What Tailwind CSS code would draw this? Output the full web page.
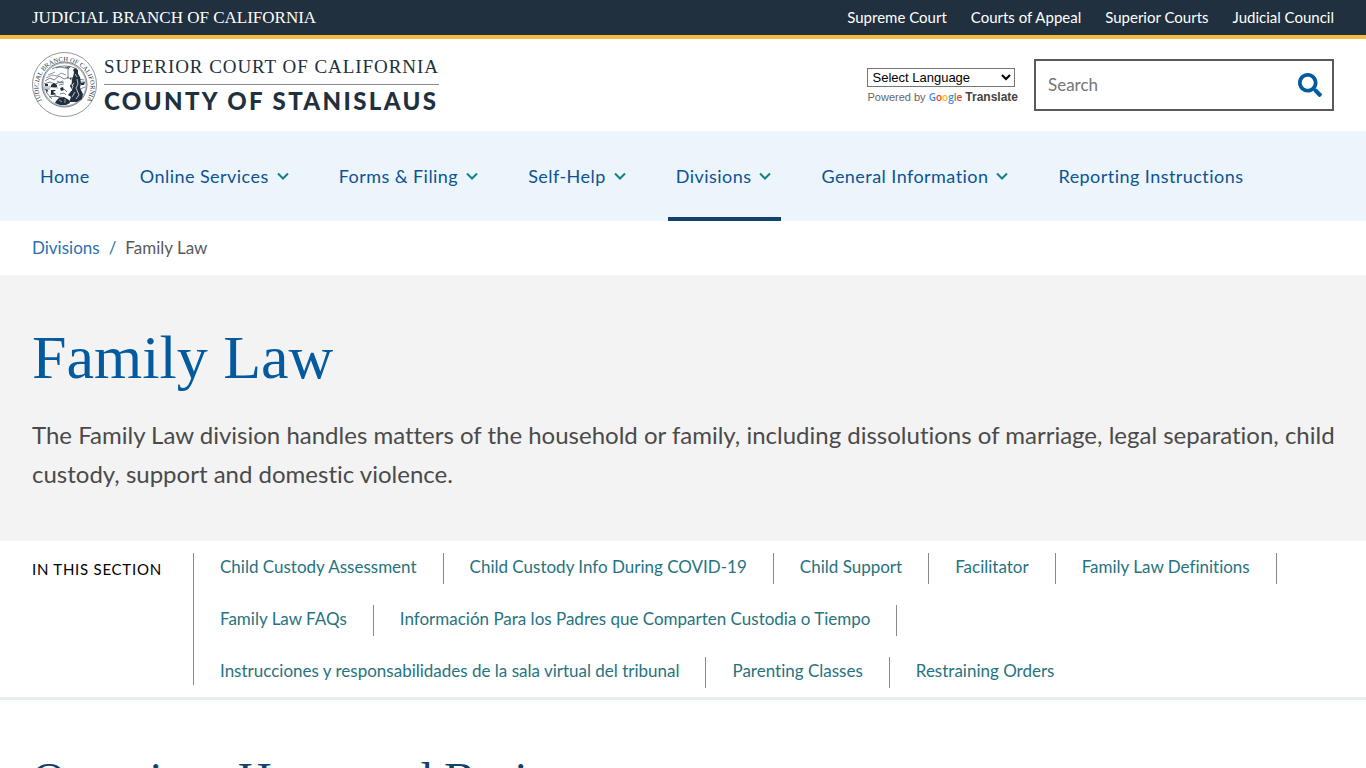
<!DOCTYPE html>
<html lang="en">

<head>
    <meta charset="UTF-8">
    <meta name="viewport" content="width=device-width, initial-scale=1.0">
    <title>Family Law | Superior Court of California | County of Stanislaus</title>
    <script src="https://cdn.jsdelivr.net/npm/@tailwindcss/browser@4"></script>
</head>

<body class="bg-white font-['Lato',sans-serif] text-[#4a4a4a] [font-variant-ligatures:none]">

    <!-- Top bar -->
    <div class="flex h-[39px] items-center justify-between border-b-4 border-[#f5bc42] bg-[#20303e] px-8 text-white">
        <a href="#" class="font-['Liberation_Serif',serif] text-[17px]">JUDICIAL BRANCH OF CALIFORNIA</a>
        <nav class="flex gap-6 text-[15px]" aria-label="Judicial branch">
            <a href="#">Supreme Court</a>
            <a href="#">Courts of Appeal</a>
            <a href="#">Superior Courts</a>
            <a href="#">Judicial Council</a>
        </nav>
    </div>

    <!-- Logo, language and search -->
    <header class="flex h-[92px] items-center justify-between px-8 pb-px">
        <a href="#" class="flex items-center gap-[7px] text-[#20303e]">
            <svg class="size-[65px]" viewBox="0 0 65 65" fill="none" stroke="currentColor" aria-hidden="true">
                <defs>
                    <path id="ring" d="M13 52.500 A26 26 0 1 1 52 52.500" />
                </defs>
                <circle cx="32.5" cy="32.5" r="32" stroke-width=".5" />
                <circle cx="32.5" cy="32.5" r="22.500" stroke-width=".6" />
                <circle cx="32.5" cy="32.5" r="21.500" stroke-width=".4" />
                <text font-family="Liberation Serif" font-size="6.5" fill="currentColor" stroke="none">
                    <textPath href="#ring" startOffset="50%" text-anchor="middle">JUDICIAL BRANCH OF CALIFORNIA</textPath>
                </text>
                <!-- sky, hills and spear -->
                <path d="M20 17c7-4 18-4 25 0M24 16l4-1 5 1 5-1M13 29l5-3 4 2 5-4 5 3 5-2M12 32l6-2 5 2 8-3M36 14v13M33 15l3 2 2-2M47 27l5 1M47 30h6M46 38l7-3M12 37h6M20 47l-6-7" stroke-width=".6" />
                <path d="M14 26l6-3 5 1 4-3 5 2M16 23l7-3M12 35h8l6 1M22 44l7 1 4 2M18 42l6 1" stroke-width=".5" />
                <!-- seated figure -->
                <path d="M41 18l2-2 3 2v4l2 3 1 6-1 5 3 6-1 5-5 3h-8l2-5-3-2 4-5-2-4 2-5-3-3 4-1 1-5z" fill="currentColor" stroke="none" />
                <path d="M40 25l-1 6 2 3-2 5M45 27l1 5-2 4 3 7-3 4M43 22l2 3M42 31l-2 3M43 40l-3 5" stroke="white" stroke-width=".7" />
                <!-- ships, bear and rocks -->
                <path d="M13 32h3v2h-3zM19 33l3-2 3 2v2h-6zM13 37l3 1-1 3zM19 38h5l-3 2 3 2-5 1zM28 36l3-1 1 3-3 1zM49 31l4-1-1 3h-3zM24 49l3-3 5-1 5 3 1 3-4 2h-6l-5-2z" fill="currentColor" stroke="none" />
                <path d="M25 29l4 2 3-1M27 33l5-1M32 37l3 3M17 45l7-1 5 2M28 42l4-1 2 2" stroke-width=".6" />
                <path d="M27 48l3 2M33 47v4" stroke="white" stroke-width=".5" />
            </svg>
            <span class="block">
                <span class="block border-b border-[#858c93] pb-[5px] font-['Liberation_Serif',serif] text-[19px] leading-6 tracking-wider">SUPERIOR COURT OF CALIFORNIA</span>
                <span class="block pt-[3px] text-2xl leading-[26px] font-black tracking-widest">COUNTY OF STANISLAUS</span>
            </span>
        </a>
        <div class="flex items-center gap-4">
            <form class="pt-[3px] font-['Liberation_Sans',sans-serif]">
                <select aria-label="Select Language" class="block h-[19px] w-[148px] appearance-auto border border-[#767676] bg-white text-[13px] text-black">
                    <option>Select Language</option>
                </select>
                <div class="pt-[2px] text-[11px] leading-4 text-[#666]">Powered by
                    <span class="font-['Open_Sans',sans-serif] text-[10px] font-semibold"><span class="text-[#4285f4]">G</span><span class="text-[#ea4335]">o</span><span class="text-[#fbbc05]">o</span><span class="text-[#4285f4]">g</span><span class="text-[#34a853]">l</span><span class="text-[#ea4335]">e</span></span>
                    <a href="#" class="text-xs leading-4 font-bold text-[#444]">Translate</a>
                </div>
            </form>
            <form class="flex h-[52px] w-[300px] items-center border-2 border-[#58595b] pr-[10px] pl-3">
                <input type="search" aria-label="Search" placeholder="Search" class="min-w-0 flex-1 text-[17px] outline-none placeholder:text-[#757575]">
                <button type="button" aria-label="Submit search" class="text-[#045a9f]">
                    <svg class="size-6" viewBox="0 0 512 512" fill="currentColor">
                        <path d="M505 442.700 405.300 343c-4.500-4.500-10.600-7-17-7H372c27.600-35.300 44-79.700 44-128C416 93.100 322.900 0 208 0S0 93.100 0 208s93.100 208 208 208c48.300 0 92.700-16.400 128-44v16.300c0 6.400 2.500 12.500 7 17l99.700 99.700c9.400 9.400 24.600 9.400 33.900 0l28.300-28.300c9.400-9.400 9.400-24.600.1-34zM208 336c-70.700 0-128-57.200-128-128 0-70.700 57.200-128 128-128 70.700 0 128 57.200 128 128 0 70.700-57.200 128-128 128z" />
                    </svg>
                </button>
            </form>
        </div>
    </header>

    <!-- Main menu -->
    <nav class="flex h-[90px] gap-8 bg-[#edf5fc] px-8 text-lg tracking-wide text-[#0b5394]" aria-label="Main">
        <a href="#" class="flex items-center border-b-4 border-transparent pt-1 pr-[10px] pl-2">Home</a>
        <a href="#" class="flex items-center gap-[6px] border-b-4 border-transparent px-2 pt-1">Online Services
            <svg class="h-3 w-4" viewBox="0 0 12 12" fill="none" stroke="#138082" stroke-width="2"><path d="M1 3.500 6 8.500 11 3.500" /></svg>
        </a>
        <a href="#" class="flex items-center gap-[6px] border-b-4 border-transparent px-2 pt-1">Forms &amp; Filing
            <svg class="h-3 w-4" viewBox="0 0 12 12" fill="none" stroke="#138082" stroke-width="2"><path d="M1 3.500 6 8.500 11 3.500" /></svg>
        </a>
        <a href="#" class="flex items-center gap-[6px] border-b-4 border-transparent px-2 pt-1">Self-Help
            <svg class="h-3 w-4" viewBox="0 0 12 12" fill="none" stroke="#138082" stroke-width="2"><path d="M1 3.500 6 8.500 11 3.500" /></svg>
        </a>
        <a href="#" class="flex items-center gap-[6px] border-b-4 border-[#11426e] px-2 pt-1">Divisions
            <svg class="h-3 w-4" viewBox="0 0 12 12" fill="none" stroke="#138082" stroke-width="2"><path d="M1 3.500 6 8.500 11 3.500" /></svg>
        </a>
        <a href="#" class="flex items-center gap-[6px] border-b-4 border-transparent px-2 pt-1">General Information
            <svg class="h-3 w-4" viewBox="0 0 12 12" fill="none" stroke="#138082" stroke-width="2"><path d="M1 3.500 6 8.500 11 3.500" /></svg>
        </a>
        <a href="#" class="flex items-center border-b-4 border-transparent px-2 pt-1">Reporting Instructions</a>
    </nav>

    <!-- Breadcrumb -->
    <nav class="flex h-[54px] items-center gap-[9px] px-8 text-[17px] text-[#2a70b0]" aria-label="Breadcrumb">
        <a href="#">Divisions</a>
        <span>/</span>
        <span class="text-[#58595b]">Family Law</span>
    </nav>

    <!-- Page title -->
    <section class="bg-[#f3f3f3] pt-[46px] pr-4 pb-12 pl-8">
        <h1 class="font-['Liberation_Serif',serif] text-[62px] leading-[72px] text-[#045a9f]">Family Law</h1>
        <p class="pt-[22px] text-2xl leading-[39px]">The Family Law division handles matters of the household or family, including dissolutions of marriage, legal separation, child custody, support and domestic violence.</p>
    </section>

    <!-- Section links -->
    <section class="flex items-start border-b-3 border-[#e3efef] px-8 pt-3 pb-[9px]">
        <h2 class="w-[161px] shrink-0 pt-[6px] text-[15px] leading-5 tracking-wider text-black">IN THIS SECTION</h2>
        <div class="mb-[3px] w-px self-stretch bg-[#8a8a8a]"></div>
        <ul class="flex flex-1 flex-wrap gap-y-[21px] text-[17px] leading-7 text-[#267380]">
            <li class="h-[31px] border-r border-[#8a8a8a] px-[26px]"><a href="#">Child Custody Assessment</a></li>
            <li class="h-[31px] border-r border-[#8a8a8a] px-[26px]"><a href="#">Child Custody Info During COVID-19</a></li>
            <li class="h-[31px] border-r border-[#8a8a8a] px-[26px]"><a href="#">Child Support</a></li>
            <li class="h-[31px] border-r border-[#8a8a8a] px-[26px]"><a href="#">Facilitator</a></li>
            <li class="h-[31px] border-r border-[#8a8a8a] px-[26px]"><a href="#">Family Law Definitions</a></li>
            <li class="h-[31px] border-r border-[#8a8a8a] px-[26px]"><a href="#">Family Law FAQs</a></li>
            <li class="h-[31px] border-r border-[#8a8a8a] px-[26px]"><a href="#">Información Para los Padres que Comparten Custodia o Tiempo</a></li>
            <li class="h-[31px] border-r border-[#8a8a8a] px-[26px]"><a href="#">Instrucciones y responsabilidades de la sala virtual del tribunal</a></li>
            <li class="h-[31px] border-r border-[#8a8a8a] px-[26px]"><a href="#">Parenting Classes</a></li>
            <li class="h-[31px] px-[26px]"><a href="#">Restraining Orders</a></li>
        </ul>
    </section>

    <main class="px-8 pt-[51px]">
        <h2 class="font-['Liberation_Serif',serif] text-[47px] leading-[56px] text-[#11426e]">Overview, Hours and Basics</h2>
    </main>

</body>

</html>
